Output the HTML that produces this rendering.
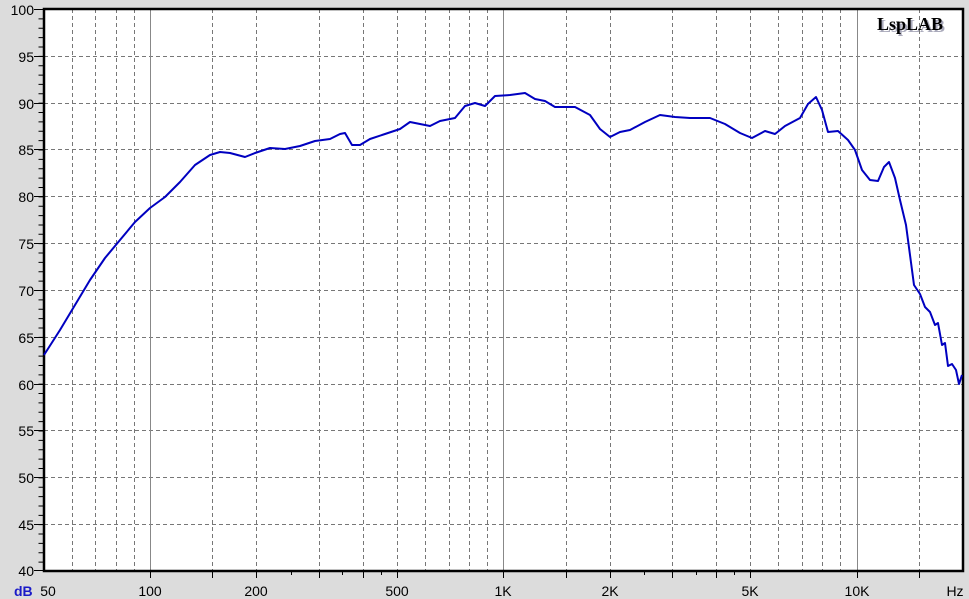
<!DOCTYPE html><html><head><style>body{margin:0;background:#dcdcdc;width:969px;height:599px;overflow:hidden}svg{display:block}text{font-family:"Liberation Sans",sans-serif}</style></head><body>
<svg width="969" height="599" viewBox="0 0 969 599">
<rect x="44" y="9" width="919" height="562" fill="#fff"/>
<g stroke="#777" stroke-width="1" stroke-dasharray="4,3">
<line x1="72.5" y1="9" x2="72.5" y2="571"/><line x1="95.5" y1="9" x2="95.5" y2="571"/><line x1="116.5" y1="9" x2="116.5" y2="571"/><line x1="134.5" y1="9" x2="134.5" y2="571"/>
<line x1="212.5" y1="9" x2="212.5" y2="571"/><line x1="256.5" y1="9" x2="256.5" y2="571"/><line x1="319.5" y1="9" x2="319.5" y2="571"/><line x1="363.5" y1="9" x2="363.5" y2="571"/><line x1="397.5" y1="9" x2="397.5" y2="571"/><line x1="425.5" y1="9" x2="425.5" y2="571"/><line x1="449.5" y1="9" x2="449.5" y2="571"/><line x1="469.5" y1="9" x2="469.5" y2="571"/><line x1="487.5" y1="9" x2="487.5" y2="571"/>
<line x1="566.5" y1="9" x2="566.5" y2="571"/><line x1="610.5" y1="9" x2="610.5" y2="571"/><line x1="672.5" y1="9" x2="672.5" y2="571"/><line x1="716.5" y1="9" x2="716.5" y2="571"/><line x1="750.5" y1="9" x2="750.5" y2="571"/><line x1="778.5" y1="9" x2="778.5" y2="571"/><line x1="802.5" y1="9" x2="802.5" y2="571"/><line x1="822.5" y1="9" x2="822.5" y2="571"/><line x1="840.5" y1="9" x2="840.5" y2="571"/><line x1="919.5" y1="9" x2="919.5" y2="571"/>
<line x1="44" y1="56.5" x2="963" y2="56.5"/><line x1="44" y1="103.5" x2="963" y2="103.5"/><line x1="44" y1="149.5" x2="963" y2="149.5"/><line x1="44" y1="196.5" x2="963" y2="196.5"/><line x1="44" y1="243.5" x2="963" y2="243.5"/><line x1="44" y1="290.5" x2="963" y2="290.5"/><line x1="44" y1="337.5" x2="963" y2="337.5"/><line x1="44" y1="384.5" x2="963" y2="384.5"/><line x1="44" y1="430.5" x2="963" y2="430.5"/><line x1="44" y1="477.5" x2="963" y2="477.5"/><line x1="44" y1="524.5" x2="963" y2="524.5"/>
</g>
<g stroke="#888" stroke-width="1"><line x1="150.5" y1="9" x2="150.5" y2="571"/><line x1="503.5" y1="9" x2="503.5" y2="571"/><line x1="857.5" y1="9" x2="857.5" y2="571"/></g>
<line x1="41" y1="9" x2="41" y2="571" stroke="#000" stroke-width="5" stroke-dasharray="1,8.367"/>
<g stroke="#000" stroke-width="1">
<line x1="34" y1="9.5" x2="44" y2="9.5"/><line x1="34" y1="56.5" x2="44" y2="56.5"/><line x1="34" y1="103.5" x2="44" y2="103.5"/><line x1="34" y1="149.5" x2="44" y2="149.5"/><line x1="34" y1="196.5" x2="44" y2="196.5"/><line x1="34" y1="243.5" x2="44" y2="243.5"/><line x1="34" y1="290.5" x2="44" y2="290.5"/><line x1="34" y1="337.5" x2="44" y2="337.5"/><line x1="34" y1="384.5" x2="44" y2="384.5"/><line x1="34" y1="430.5" x2="44" y2="430.5"/><line x1="34" y1="477.5" x2="44" y2="477.5"/><line x1="34" y1="524.5" x2="44" y2="524.5"/><line x1="34" y1="570.5" x2="44" y2="570.5"/>
<line x1="150.5" y1="571" x2="150.5" y2="578"/><line x1="212.5" y1="571" x2="212.5" y2="578"/><line x1="256.5" y1="571" x2="256.5" y2="578"/><line x1="291.5" y1="571" x2="291.5" y2="575"/><line x1="319.5" y1="571" x2="319.5" y2="578"/><line x1="342.5" y1="571" x2="342.5" y2="575"/><line x1="363.5" y1="571" x2="363.5" y2="578"/><line x1="381.5" y1="571" x2="381.5" y2="575"/><line x1="397.5" y1="571" x2="397.5" y2="578"/>
<line x1="503.5" y1="571" x2="503.5" y2="578"/><line x1="566.5" y1="571" x2="566.5" y2="578"/><line x1="610.5" y1="571" x2="610.5" y2="578"/><line x1="644.5" y1="571" x2="644.5" y2="575"/><line x1="672.5" y1="571" x2="672.5" y2="578"/><line x1="696.5" y1="571" x2="696.5" y2="575"/><line x1="716.5" y1="571" x2="716.5" y2="578"/><line x1="734.5" y1="571" x2="734.5" y2="575"/><line x1="750.5" y1="571" x2="750.5" y2="578"/><line x1="857.5" y1="571" x2="857.5" y2="578"/><line x1="919.5" y1="571" x2="919.5" y2="578"/>
</g>
<g font-size="14" text-anchor="end">
<text x="34" y="15">100</text><text x="34" y="62">95</text><text x="34" y="109">90</text><text x="34" y="155">85</text><text x="34" y="202">80</text><text x="34" y="249">75</text><text x="34" y="296">70</text><text x="34" y="343">65</text><text x="34" y="390">60</text><text x="34" y="436">55</text><text x="34" y="483">50</text><text x="34" y="530">45</text><text x="34" y="576">40</text>
</g>
<rect x="44" y="9" width="919" height="562" fill="none" stroke="#000" stroke-width="2.5"/>
<polyline fill="none" stroke="#0000c0" stroke-width="2" stroke-linejoin="round" points="44,355 60,330 75,305 90,280 105,258 120,240 135,222 150,208 165,197 180,182 195,165 210,155 220,152 230,153 245,157 255,153 270,148 285,149 300,146 315,141 330,139 340,134 345,133 352,145 360,145 370,139 385,134 400,129 410,122 420,124 430,126 440,121 455,118 465,106 475,103 485,106 495,96 510,95 525,93 535,99 545,101 555,107 575,107 590,115 600,129 610,137 620,132 630,130 645,122 660,115 675,117 690,118 710,118 725,124 740,133 752,138 765,131 775,134 785,126 800,118 808,104 816,97 822,110 828,132 838,131 848,140 855,150 862,170 870,180 878,181 884,167 889,162 895,178 900,200 906,225 910,255 914,285 920,294 925,307 930,312 935,325 938,323 942,345 945,343 948,366 952,364 956,370 959,384 962,375"/>
<text x="879" y="32" font-size="18" font-weight="bold" fill="#aab" style="font-family:'Liberation Serif',serif">LspLAB</text>
<text x="877" y="30" font-size="18" font-weight="bold" fill="#000" style="font-family:'Liberation Serif',serif">LspLAB</text>
<text x="14" y="596" font-size="14" font-weight="bold" fill="#1a1ac8">dB</text>
<g font-size="14" text-anchor="middle"><text x="48" y="596">50</text><text x="150" y="596">100</text><text x="256" y="596">200</text><text x="397" y="596">500</text><text x="503" y="596">1K</text><text x="610" y="596">2K</text><text x="750" y="596">5K</text><text x="857" y="596">10K</text><text x="955" y="596">Hz</text></g>
</svg></body></html>
